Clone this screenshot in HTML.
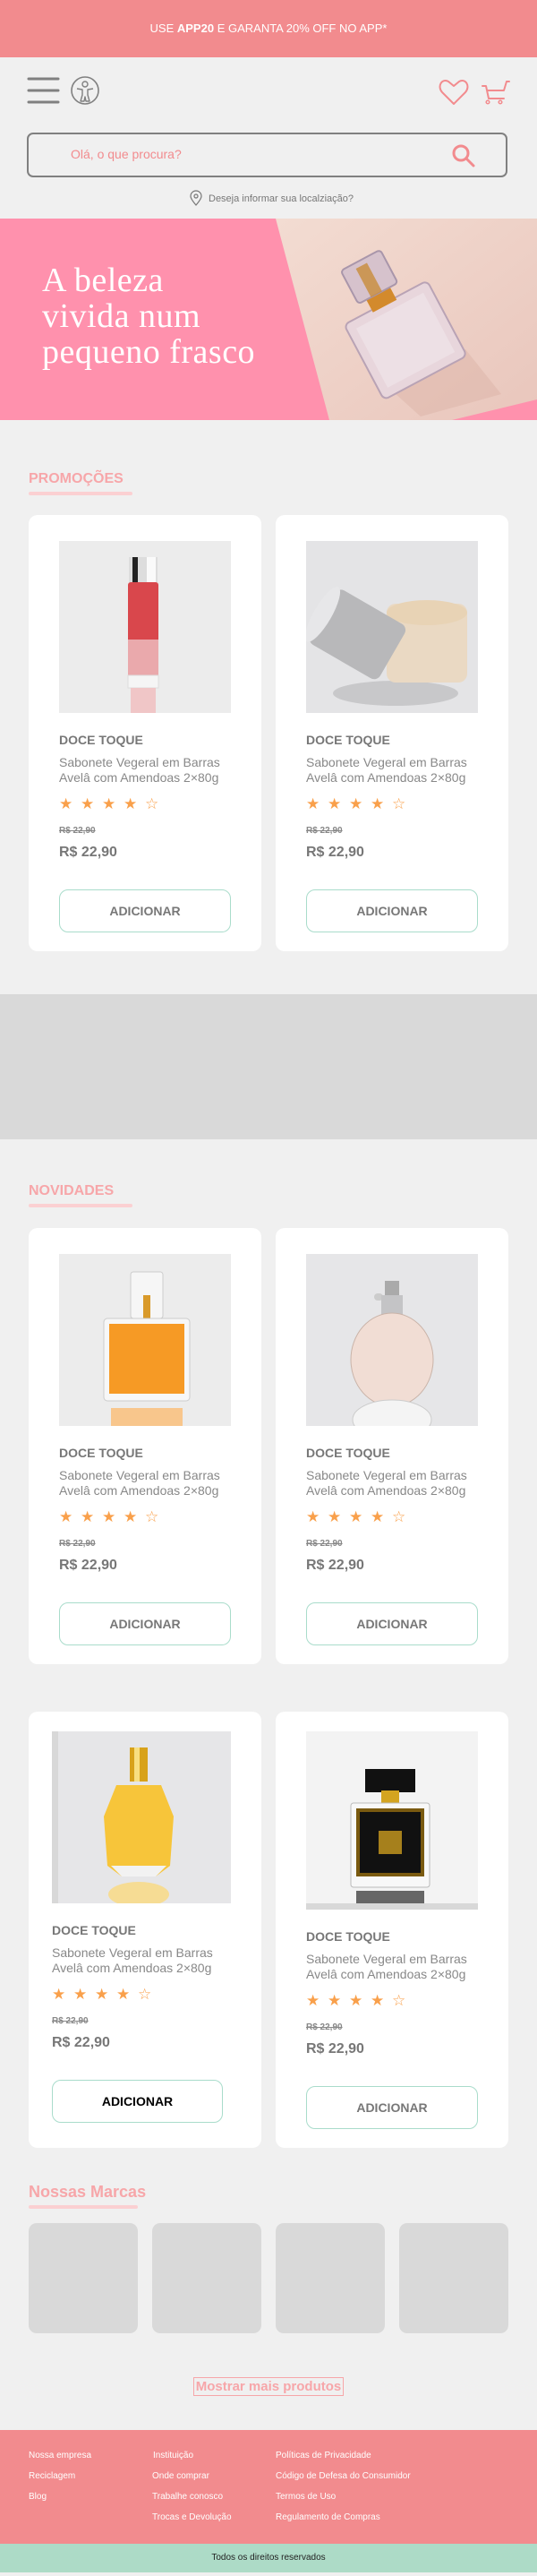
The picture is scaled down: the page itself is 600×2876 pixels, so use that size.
<!DOCTYPE html>
<html><head><meta charset="utf-8">
<style>
*{margin:0;padding:0;box-sizing:border-box}
body{width:600px;height:2876px;background:#f0f0f0;font-family:"Liberation Sans",Arial,sans-serif;position:relative;overflow:hidden}
.a{position:absolute}
.top{left:0;top:0;width:600px;height:64px;background:#f28b8e;color:#fff;font-size:13px;text-align:center;line-height:64px}
.title{left:32px;color:#f7a6a9;font-weight:bold;font-size:16px}
.uline{left:32px;width:116px;height:4px;border-radius:2px;background:#fbd0d2}
.card{background:#fff;border-radius:10px;width:260px;height:487px}
.brand{font-size:14px;font-weight:bold;color:#777;white-space:nowrap}
.desc{font-size:14px;color:#888;line-height:17px;white-space:nowrap}
.stars{font-size:17px;color:#f9a04b;white-space:nowrap}
.stars span{display:inline-block;width:24px}
.old{font-size:10px;font-weight:bold;color:#888;text-decoration:line-through}
.price{font-size:16px;font-weight:bold;color:#777}
.btn{border:1px solid #a9dccb;border-radius:10px;height:48px;font-size:14px;font-weight:bold;color:#777;text-align:center;line-height:46px}
.brandbox{top:2482px;width:122px;height:123px;background:#d9d9d9;border-radius:9px}
.fl{font-size:10px;color:#fff;white-space:nowrap}
</style></head><body>

<div class="a top">USE <b>APP20</b> E GARANTA 20% OFF NO APP*</div>

<!-- header icons -->
<svg class="a" style="left:0;top:64px" width="600" height="180" viewBox="0 64 600 180">
 <g stroke="#808080" stroke-width="3" stroke-linecap="round">
  <line x1="32" y1="88" x2="65" y2="88"/><line x1="32" y1="101" x2="65" y2="101"/><line x1="32" y1="114" x2="65" y2="114"/>
 </g>
 <circle cx="95" cy="101" r="15" fill="none" stroke="#808080" stroke-width="1.6"/>
 <circle cx="95" cy="94" r="3" fill="none" stroke="#808080" stroke-width="1.4"/>
 <path d="M86 99 L92 100 L92 106 L90 113 L94 113 L95 108 L96 113 L100 113 L98 106 L98 100 L104 99" fill="none" stroke="#808080" stroke-width="1.4" stroke-linejoin="round"/>
 <path d="M507 116 L494 103 C488 96 494 87 501 91 L507 96 L513 91 C520 87 526 96 520 103 Z" fill="none" stroke="#f28b8e" stroke-width="2" stroke-linejoin="round"/>
 <path d="M539 96 L543 96 L546 110 L563 110 M544 101 L563 101 L566 91 L569 91" fill="none" stroke="#f28b8e" stroke-width="2" stroke-linecap="round" stroke-linejoin="round"/>
 <circle cx="545" cy="114" r="1.8" fill="none" stroke="#f28b8e" stroke-width="1.5"/>
 <circle cx="559" cy="114" r="1.8" fill="none" stroke="#f28b8e" stroke-width="1.5"/>
 <rect x="31" y="149" width="535" height="48" rx="6" fill="none" stroke="#808080" stroke-width="2"/>
 <circle cx="515" cy="171" r="8" fill="none" stroke="#f28b8e" stroke-width="3"/>
 <line x1="521" y1="177" x2="529" y2="185" stroke="#f28b8e" stroke-width="3" stroke-linecap="round"/>
 <path d="M219 229 C213 222 213 220 213 219 A6 6 0 0 1 225 219 C225 220 225 222 219 229 Z" fill="none" stroke="#777" stroke-width="1.2"/>
 <circle cx="219" cy="219" r="2" fill="none" stroke="#777" stroke-width="1.2"/>
</svg>
<div class="a" style="left:79px;top:164px;font-size:14px;color:#f28b8e">Olá, o que procura?</div>
<div class="a" style="left:233px;top:216px;font-size:11px;color:#777">Deseja informar sua localziação?</div>

<!-- hero -->
<svg class="a" style="left:0;top:244px" width="600" height="225" viewBox="0 244 600 225">
 <defs><linearGradient id="bg" x1="0" y1="0" x2="1" y2="1"><stop offset="0" stop-color="#f3dcd2"/><stop offset="1" stop-color="#e9c6bc"/></linearGradient></defs>
 <rect x="0" y="244" width="600" height="225" fill="#ff91ad"/>
 <polygon points="308,244 600,244 600,446 505,469 368,469" fill="url(#bg)"/>
 <polygon points="420,420 520,390 560,440 470,465" fill="#dcb3a8" opacity=".5"/>
 <g transform="rotate(-28 445 370)">
  <rect x="395" y="335" width="105" height="95" rx="6" fill="#e8d6dc" stroke="#b9a3b5" stroke-width="2"/>
  <rect x="405" y="345" width="85" height="75" fill="#f0e4e8" opacity=".7"/>
  <rect x="430" y="320" width="30" height="18" fill="#d38a2c"/>
  <rect x="420" y="280" width="50" height="42" rx="4" fill="#d6c2cc" stroke="#a996aa" stroke-width="2"/>
  <rect x="436" y="286" width="14" height="36" fill="#c88c3a" opacity=".8"/>
 </g>
</svg>
<div class="a" style="left:47px;top:293px;font-family:'Liberation Serif',serif;font-size:38px;line-height:40px;color:#fff;font-weight:normal;letter-spacing:0.5px">A beleza<br>vivida num<br>pequeno frasco</div>

<!-- PROMOÇÕES -->
<div class="a title" style="top:526px">PROMOÇÕES</div>
<div class="a uline" style="top:549px"></div>

<!-- card generator content manually -->
<div class="a card" style="left:32px;top:575px"></div>
<div class="a card" style="left:308px;top:575px"></div>
<svg class="a" style="left:66px;top:604px" width="192" height="192"><rect width="192" height="192" fill="#ececec"/>
 <rect x="78" y="18" width="32" height="28" fill="#ddd"/><rect x="82" y="18" width="6" height="28" fill="#222"/><rect x="98" y="18" width="10" height="28" fill="#fafafa"/>
 <rect x="77" y="46" width="34" height="110" rx="3" fill="#d9474c"/><rect x="77" y="110" width="34" height="46" fill="#eaa9ac"/>
 <rect x="77" y="150" width="34" height="14" fill="#f5f5f5" stroke="#ddd"/><rect x="80" y="164" width="28" height="28" fill="#f0c6c7"/></svg>
<svg class="a" style="left:342px;top:604px" width="192" height="192"><rect width="192" height="192" fill="#e4e4e6"/>
 <ellipse cx="100" cy="170" rx="70" ry="14" fill="#c8c8ca"/>
 <rect x="90" y="70" width="90" height="88" rx="10" fill="#ead9c3"/><ellipse cx="135" cy="80" rx="45" ry="14" fill="#e8d3b5"/>
 <g transform="rotate(30 60 100)"><rect x="15" y="70" width="90" height="70" rx="8" fill="#b8b8ba"/><ellipse cx="15" cy="105" rx="10" ry="35" fill="#e7e7e9"/></g></svg>

<div class="a brand" style="left:66px;top:818px">DOCE TOQUE</div>
<div class="a desc" style="left:66px;top:843px">Sabonete Vegeral em Barras<br>Avelâ com Amendoas 2×80g</div>
<div class="a stars" style="left:66px;top:888px"><span>★</span><span>★</span><span>★</span><span>★</span><span>☆</span></div>
<div class="a old" style="left:66px;top:922px">R$ 22,90</div>
<div class="a price" style="left:66px;top:943px">R$ 22,90</div>
<div class="a btn" style="left:66px;top:993px;width:192px">ADICIONAR</div>

<div class="a brand" style="left:342px;top:818px">DOCE TOQUE</div>
<div class="a desc" style="left:342px;top:843px">Sabonete Vegeral em Barras<br>Avelâ com Amendoas 2×80g</div>
<div class="a stars" style="left:342px;top:888px"><span>★</span><span>★</span><span>★</span><span>★</span><span>☆</span></div>
<div class="a old" style="left:342px;top:922px">R$ 22,90</div>
<div class="a price" style="left:342px;top:943px">R$ 22,90</div>
<div class="a btn" style="left:342px;top:993px;width:192px">ADICIONAR</div>

<!-- grey band -->
<div class="a" style="left:0;top:1110px;width:600px;height:162px;background:#d9d9d9"></div>

<!-- NOVIDADES -->
<div class="a title" style="top:1321px">NOVIDADES</div>
<div class="a uline" style="top:1344px"></div>

<div class="a card" style="left:32px;top:1371px"></div>
<div class="a card" style="left:308px;top:1371px"></div>
<svg class="a" style="left:66px;top:1400px" width="192" height="192"><rect width="192" height="192" fill="#ececec"/>
 <rect x="80" y="20" width="36" height="52" rx="3" fill="#f6f6f6" stroke="#ccc"/><rect x="94" y="46" width="8" height="26" fill="#d99a2a"/>
 <rect x="50" y="72" width="96" height="92" rx="4" fill="#f7f7f7" stroke="#ccc"/><rect x="56" y="78" width="84" height="78" fill="#f69a25"/>
 <rect x="58" y="172" width="80" height="20" fill="#f8c68c"/></svg>
<svg class="a" style="left:342px;top:1400px" width="192" height="192"><rect width="192" height="192" fill="#e6e6e8"/>
 <rect x="88" y="30" width="16" height="16" fill="#aaa"/><rect x="76" y="44" width="10" height="8" rx="4" fill="#ccc"/><rect x="84" y="46" width="24" height="22" fill="#c4c4c6"/>
 <ellipse cx="96" cy="118" rx="46" ry="52" fill="#f1ddd4" stroke="#c9b3a8"/><ellipse cx="96" cy="185" rx="44" ry="22" fill="#f4f4f4" stroke="#ccc"/></svg>

<div class="a brand" style="left:66px;top:1614px">DOCE TOQUE</div>
<div class="a desc" style="left:66px;top:1639px">Sabonete Vegeral em Barras<br>Avelâ com Amendoas 2×80g</div>
<div class="a stars" style="left:66px;top:1684px"><span>★</span><span>★</span><span>★</span><span>★</span><span>☆</span></div>
<div class="a old" style="left:66px;top:1718px">R$ 22,90</div>
<div class="a price" style="left:66px;top:1739px">R$ 22,90</div>
<div class="a btn" style="left:66px;top:1789px;width:192px">ADICIONAR</div>

<div class="a brand" style="left:342px;top:1614px">DOCE TOQUE</div>
<div class="a desc" style="left:342px;top:1639px">Sabonete Vegeral em Barras<br>Avelâ com Amendoas 2×80g</div>
<div class="a stars" style="left:342px;top:1684px"><span>★</span><span>★</span><span>★</span><span>★</span><span>☆</span></div>
<div class="a old" style="left:342px;top:1718px">R$ 22,90</div>
<div class="a price" style="left:342px;top:1739px">R$ 22,90</div>
<div class="a btn" style="left:342px;top:1789px;width:192px">ADICIONAR</div>

<!-- row 3 -->
<div class="a card" style="left:32px;top:1911px"></div>
<div class="a card" style="left:308px;top:1911px"></div>
<svg class="a" style="left:58px;top:1933px" width="200" height="192"><rect width="200" height="192" fill="#e6e6e8"/><rect width="7" height="192" fill="#d8d8d8"/>
 <rect x="87" y="18" width="20" height="38" fill="#d8a21a"/><rect x="92" y="18" width="6" height="38" fill="#f8df80"/>
 <path d="M72 60 L122 60 L136 95 L132 150 L116 162 L78 162 L62 150 L58 95 Z" fill="#f7c53a"/>
 <path d="M66 150 L128 150 L116 162 L78 162 Z" fill="#f2f2f2"/>
 <ellipse cx="97" cy="182" rx="34" ry="14" fill="#f6dc94"/></svg>
<svg class="a" style="left:342px;top:1933px" width="192" height="199"><rect width="192" height="192" fill="#f3f3f3"/><rect y="192" width="192" height="7" fill="#d8d8d8"/>
 <rect x="66" y="42" width="56" height="26" fill="#111"/><rect x="84" y="66" width="20" height="14" fill="#d4a420"/>
 <rect x="50" y="80" width="88" height="94" rx="3" fill="#f8f8f8" stroke="#bbb"/><rect x="56" y="86" width="76" height="76" fill="#7a5a10"/><rect x="60" y="90" width="68" height="68" fill="#111"/>
 <rect x="81" y="111" width="26" height="26" fill="#a6801c"/><rect x="56" y="178" width="76" height="14" fill="#666"/></svg>

<div class="a brand" style="left:58px;top:2147px">DOCE TOQUE</div>
<div class="a desc" style="left:58px;top:2172px">Sabonete Vegeral em Barras<br>Avelâ com Amendoas 2×80g</div>
<div class="a stars" style="left:58px;top:2217px"><span>★</span><span>★</span><span>★</span><span>★</span><span>☆</span></div>
<div class="a old" style="left:58px;top:2251px">R$ 22,90</div>
<div class="a price" style="left:58px;top:2272px">R$ 22,90</div>
<div class="a btn" style="left:58px;top:2322px;width:191px;color:#000">ADICIONAR</div>

<div class="a brand" style="left:342px;top:2154px">DOCE TOQUE</div>
<div class="a desc" style="left:342px;top:2179px">Sabonete Vegeral em Barras<br>Avelâ com Amendoas 2×80g</div>
<div class="a stars" style="left:342px;top:2224px"><span>★</span><span>★</span><span>★</span><span>★</span><span>☆</span></div>
<div class="a old" style="left:342px;top:2258px">R$ 22,90</div>
<div class="a price" style="left:342px;top:2279px">R$ 22,90</div>
<div class="a btn" style="left:342px;top:2329px;width:192px">ADICIONAR</div>

<!-- Nossas Marcas -->
<div class="a" style="left:32px;top:2437px;font-size:18px;font-weight:bold;color:#f7a6a9">Nossas Marcas</div>
<div class="a uline" style="top:2462px;width:122px"></div>
<div class="a brandbox" style="left:32px"></div>
<div class="a brandbox" style="left:170px"></div>
<div class="a brandbox" style="left:308px"></div>
<div class="a brandbox" style="left:446px"></div>

<div class="a" style="left:216px;top:2654px;width:168px;height:21px;border:1px solid #f7a6a9;color:#f7a6a9;font-size:15px;font-weight:bold;text-align:center;line-height:19px">Mostrar mais produtos</div>

<!-- footer -->
<div class="a" style="left:0;top:2713px;width:600px;height:127px;background:#f28b8e"></div>
<div class="a fl" style="left:32px;top:2736px">Nossa empresa</div>
<div class="a fl" style="left:32px;top:2759px">Reciclagem</div>
<div class="a fl" style="left:32px;top:2782px">Blog</div>
<div class="a fl" style="left:171px;top:2736px">Instituição</div>
<div class="a fl" style="left:170px;top:2759px">Onde comprar</div>
<div class="a fl" style="left:170px;top:2782px">Trabalhe conosco</div>
<div class="a fl" style="left:170px;top:2805px">Trocas e Devolução</div>
<div class="a fl" style="left:308px;top:2736px">Políticas de Privacidade</div>
<div class="a fl" style="left:308px;top:2759px">Código de Defesa do Consumidor</div>
<div class="a fl" style="left:308px;top:2782px">Termos de Uso</div>
<div class="a fl" style="left:308px;top:2805px">Regulamento de Compras</div>
<div class="a" style="left:0;top:2840px;width:600px;height:32px;background:#addbc7;font-size:10px;color:#222;text-align:center;line-height:32px">Todos os direitos reservados</div>
</body></html>
